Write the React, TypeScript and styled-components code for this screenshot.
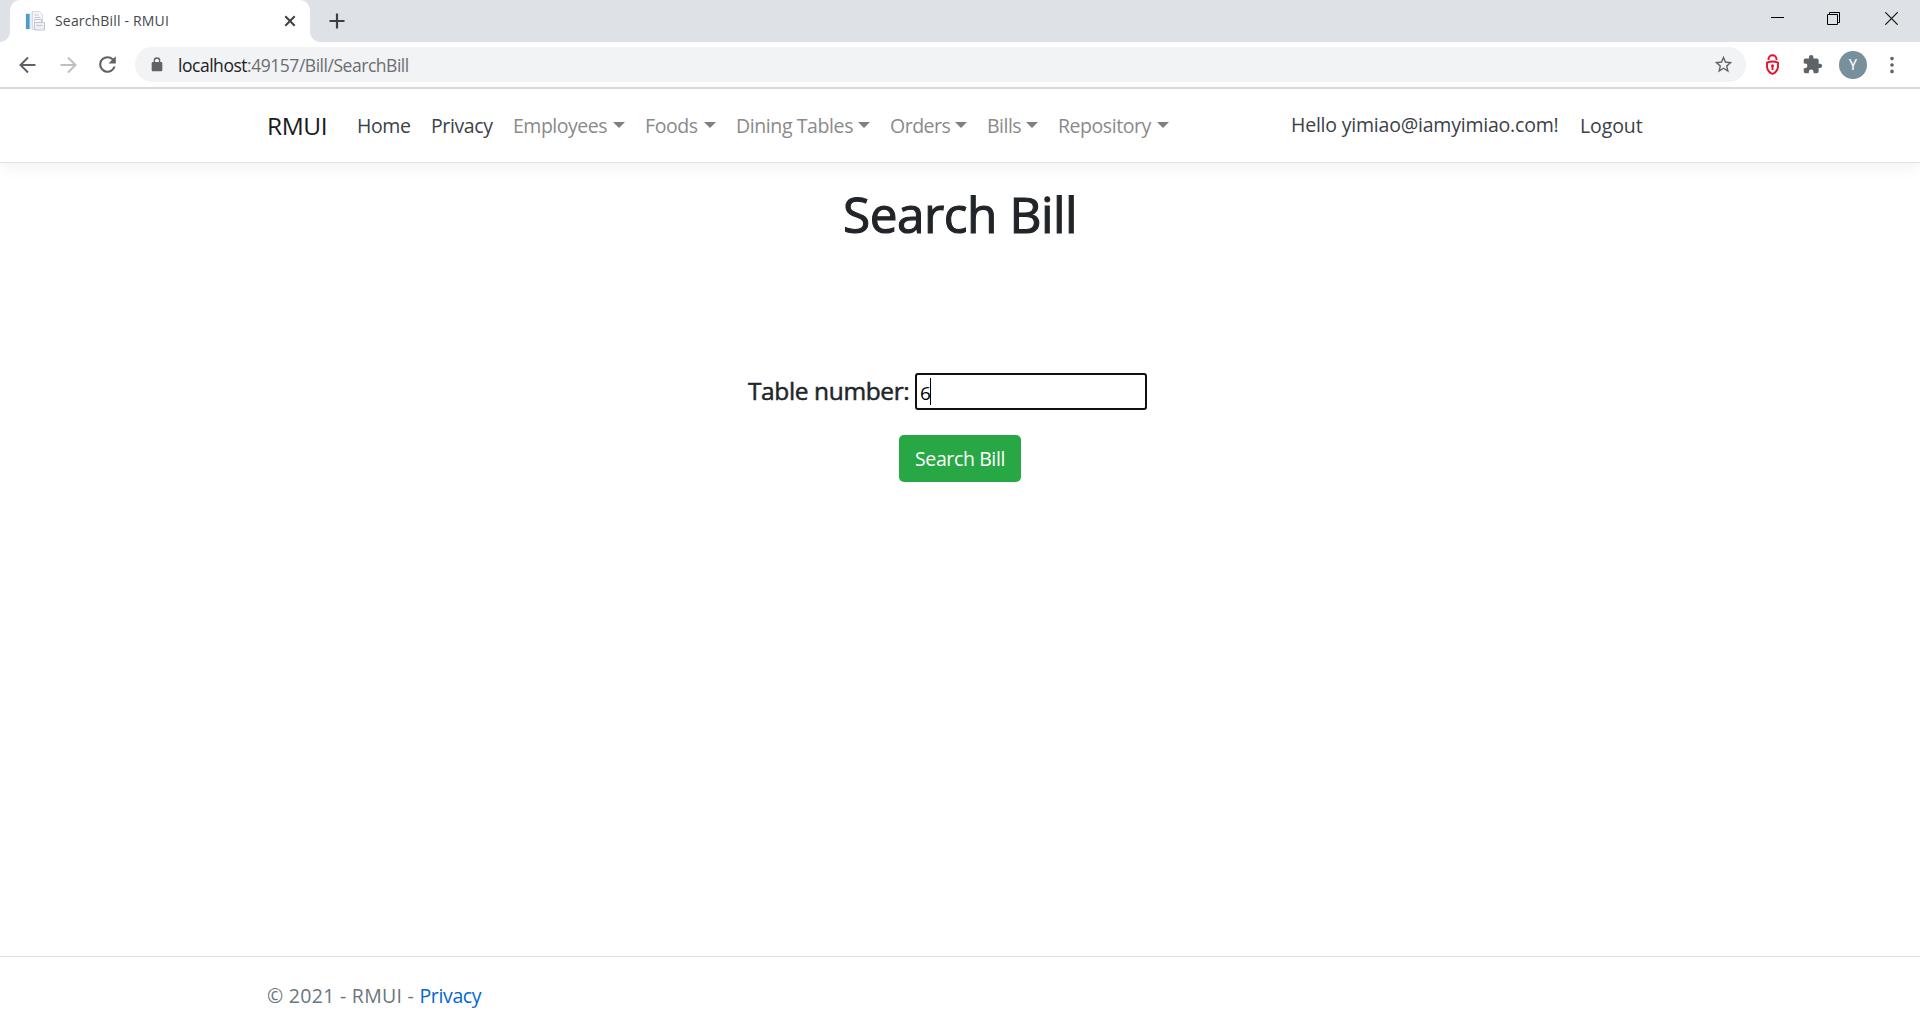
import React from 'react';
import styled, { createGlobalStyle } from 'styled-components';

const Global = createGlobalStyle`
  *, *::before, *::after { box-sizing: border-box; }
  body { margin: 0; background: #fff; overflow: hidden; }
  body, input, button { font-family: "Open Sans", "Noto Sans", sans-serif; font-weight: 400; }
`;

const Window = styled.div`
  display: flex;
  flex-direction: column;
  height: 1024px;
  color: #212529;
`;

const TabStrip = styled.div`
  display: flex;
  align-items: flex-end;
  height: 42px;
  background: #dee1e6;
`;

const Tab = styled.div`
  position: relative;
  display: flex;
  align-items: center;
  width: 300px;
  height: 42px;
  margin-left: 10px;
  padding: 0 13px 0 15px;
  border-radius: 10px 10px 0 0;
  background: #fff;
  &::before, &::after {
    content: '';
    position: absolute;
    bottom: 0;
    width: 10px;
    height: 10px;
  }
  &::before { left: -10px; background: radial-gradient(circle at 0 0, #dee1e6 9.5px, #fff 10px); }
  &::after { right: -10px; background: radial-gradient(circle at 100% 0, #dee1e6 9.5px, #fff 10px); }
`;

const Text = styled.span<{ $ls?: number }>`
  white-space: nowrap;
  letter-spacing: ${p => p.$ls ?? 0}px;
`;

const TabTitle = styled(Text)`
  flex: 1;
  margin-left: 10px;
  font-size: 14px;
  line-height: 20px;
  color: #45494d;
`;

const NewTab = styled.div`
  display: flex;
  align-items: center;
  height: 42px;
  margin-left: 19px;
`;

const Controls = styled.div`
  display: flex;
  align-items: center;
  gap: 44px;
  height: 37px;
  margin: 0 22px auto auto;
  svg:nth-child(2) { margin: 0 1px 0 -1px; }
`;

const Toolbar = styled.div`
  display: flex;
  align-items: center;
  height: 47px;
  padding: 0 18px 0 18px;
  border-bottom: 2px solid #dadce0;
`;

const NavIcons = styled.div`
  display: flex;
  align-items: center;
  gap: 20px;
  width: 117px;
  svg:last-child { margin-left: -3px; }
`;

const Omnibox = styled.div`
  display: flex;
  align-items: center;
  flex: 1;
  height: 35px;
  margin-top: -1px;
  padding: 0 12px 0 14px;
  border-radius: 18px;
  background: #f1f3f4;
`;

const Url = styled(Text)`
  flex: 1;
  margin-left: 13px;
  padding-top: 1px;
  font-size: 17.5px;
  line-height: 24px;
  color: #6a6e72;
  b { font-weight: inherit; color: #202124; }
`;

const Extensions = styled.div`
  display: flex;
  align-items: center;
  gap: 15px;
  margin-left: 14px;
  svg:nth-child(-n + 2) { margin-right: 1.5px; }
`;

const Avatar = styled.div`
  display: grid;
  place-items: center;
  width: 28px;
  height: 28px;
  border-radius: 50%;
  background: #78909c;
  color: #fff;
  font: 14px Roboto, sans-serif;
`;

const Navbar = styled.header`
  flex: none;
  height: 74px;
  padding: 10px 267px 0;
  border-bottom: 1px solid #dee2e6;
  box-shadow: 0 5px 15px rgba(0, 0, 0, 0.05);
`;

const NavRow = styled.nav`
  display: flex;
  align-items: center;
  height: 54px;
`;

const Brand = styled(Text)`
  width: 90px;
  font-size: 24.5px;
  line-height: 38px;
  color: #1a1a1a;
`;

const NavLink = styled.a<{ $w: number; $muted?: boolean }>`
  display: flex;
  align-items: center;
  flex: none;
  width: ${p => p.$w}px;
  font-size: 19.5px;
  line-height: 30px;
  color: ${p => (p.$muted ? '#8a8a8a' : '#3b4147')};
`;

const Caret = styled.i`
  margin: -3px 20px 0 auto;
  border: 6px solid transparent;
  border-top-color: #808080;
  border-bottom: 0;
`;

const Greeting = styled(NavLink)`
  margin: -2px 0 0 auto;
`;

const Main = styled.main`
  display: flex;
  flex-direction: column;
  align-items: center;
  flex: 1;
  padding-top: 21px;
`;

const Title = styled.h1<{ $ls: number }>`
  margin: 0;
  font-size: 49.5px;
  line-height: 60px;
  font-weight: 400;
  letter-spacing: ${p => p.$ls}px;
  color: #212529;
  -webkit-text-stroke: 1.1px #212529;
`;

const Field = styled.label`
  display: flex;
  align-items: center;
  width: 399px;
  height: 37px;
  margin: 129px 25px 0 0;
`;

const Label = styled(Text)`
  width: 167px;
  margin-top: -2px;
  font-size: 24.5px;
  line-height: 30px;
  -webkit-text-stroke: 0.5px #212529;
`;

const Input = styled.div`
  display: flex;
  align-items: center;
  flex: 1;
  height: 37px;
  padding: 2px 0 0 3px;
  border: 2px solid #101010;
  border-radius: 3px;
  background: #fff;
  color: #000;
  font-size: 19px;
`;

const Cursor = styled.i`
  width: 1px;
  height: 27px;
  margin: -3px 0 0 -1px;
  background: #000;
`;

const Submit = styled.button`
  width: 122px;
  height: 47px;
  margin-top: 25px;
  padding: 0;
  border: 0;
  border-radius: 5px;
  background: #28a745;
  color: #fff;
  font-size: 19.5px;
  white-space: nowrap;
`;

const Footer = styled.footer`
  height: 68px;
  padding: 24px 267px 0;
  border-top: 1px solid #dee2e6;
  font-size: 19.5px;
  line-height: 30px;
  color: #6c757d;
`;

const FooterLink = styled(Text)`
  color: #0366d6;
`;

const menus: [string, number, number][] = [
  ['Employees', 132, -0.5],
  ['Foods', 91, -0.4],
  ['Dining Tables', 154, -0.4],
  ['Orders', 97, -0.5],
  ['Bills', 71, -0.5],
  ['Repository', 131, -0.45],
];

const Icon = ({ d, size = 20, color = '#5f6368' }: { d: string; size?: number; color?: string }) => (
  <svg width={size} height={size} viewBox="0 0 24 24" fill={color} style={{ flex: 'none' }}><path d={d} /></svg>
);

const Favicon = () => (
  <svg width="20" height="20" viewBox="0 0 20 20">
    <path d="M.5 1.5H7v17H.5z" fill="#e6edf3" />
    <path d="M1 3h3.600v15H1z" fill="#4a9bd1" />
    <path d="M7.500.500h7l3 3v15h-10z" fill="#f5f6f9" stroke="#d6d9e2" />
    <path d="M9.500 4h4M9.500 6.500h6" stroke="#c5c8d4" />
    <path d="M9.500 10.500v-2h7v3" stroke="#c3c6d2" fill="#f9f9fb" />
    <path d="M9.500 11.500h10v7.500h-10z" fill="#eeeff4" stroke="#c3c6d2" />
    <path d="M11.500 14.500h6" stroke="#c3c6d2" />
  </svg>
);

export default function App() {
  return (
    <Window>
      <Global />
      <TabStrip>
        <Tab>
          <Favicon />
          <TabTitle $ls={0.17}>SearchBill - RMUI</TabTitle>
          <svg width="14" height="14" viewBox="0 0 14 14" stroke="#3c4043" strokeWidth="2"><path d="M2.300 2.300l9.400 9.400M11.700 2.300l-9.400 9.400" /></svg>
        </Tab>
        <NewTab>
          <svg width="16" height="16" viewBox="0 0 16 16" stroke="#3c4043" strokeWidth="2.200"><path d="M8 .500v15M.500 8h15" /></svg>
        </NewTab>
        <Controls>
          <svg width="13" height="13" viewBox="0 0 13 13" stroke="#000"><path d="M0 5.500h13" /></svg>
          <svg width="13" height="13" viewBox="0 0 13 13" stroke="#000" fill="none"><path d="M.500 2.500h10v10H.500zM2.500 2.500v-2h10v10h-2" /></svg>
          <svg width="13" height="13" viewBox="0 0 13 13" stroke="#111" strokeWidth="1.200"><path d="M.300.300l12.400 12.400M12.700.300L.300 12.700" /></svg>
        </Controls>
      </TabStrip>
      <Toolbar>
        <NavIcons>
          <svg width="20" height="20" viewBox="0 0 20 20" stroke="#5f6368" strokeWidth="2" fill="none"><path d="M17.500 10H3M10 2.500L2.500 10l7.500 7.500" /></svg>
          <svg width="20" height="20" viewBox="0 0 20 20" stroke="#bdbfc1" strokeWidth="2" fill="none"><path d="M2.500 10H17M10 2.500l7.500 7.500-7.500 7.500" /></svg>
          <Icon size={25} d="M17.650 6.350A7.960 7.960 0 0 0 12 4a8 8 0 1 0 7.730 10h-2.080A6 6 0 1 1 12 6c1.660 0 3.140.690 4.220 1.780L13 11h7V4z" />
        </NavIcons>
        <Omnibox>
          <Icon size={16} d="M18 9h-1V7A5 5 0 0 0 7 7v2H6a2 2 0 0 0-2 2v10c0 1.100.900 2 2 2h12a2 2 0 0 0 2-2V11a2 2 0 0 0-2-2zM9 9V7a3 3 0 0 1 6 0v2z" />
          <Url $ls={-0.47}><b>localhost</b>:49157/Bill/SearchBill</Url>
          <Icon size={21} d="M22 9.240l-7.190-.620L12 2 9.190 8.630 2 9.240l5.460 4.730L5.820 21 12 17.270 18.180 21l-1.630-7.030L22 9.240zM12 15.400l-3.760 2.270 1-4.280-3.320-2.880 4.380-.380L12 6.100l1.710 4.040 4.380.380-3.320 2.880 1 4.280L12 15.400z" />
        </Omnibox>
        <Extensions>
          <svg width="25" height="22" viewBox="0 0 25 22" fill="none" stroke="#e8112d" strokeWidth="1.900">
            <path d="M8.500 6V5.300a4 4 0 0 1 8 0V6M7 8.700q5.500-2.500 11 0v4.300q-.800 5-5.500 7Q7.800 18 7 13z" />
            <circle cx="12.500" cy="11.800" r="1.500" fill="#e8112d" stroke="none" /><path d="M12.500 12v4" />
          </svg>
          <Icon size={21} d="M20.500 11H19V7c0-1.100-.900-2-2-2h-4V3.500a2.500 2.500 0 0 0-5 0V5H4c-1.100 0-2 .900-2 2v3.800h1.500a2.700 2.700 0 0 1 0 5.400H2V20c0 1.100.900 2 2 2h3.800v-1.500a2.700 2.700 0 0 1 5.400 0V22H17c1.100 0 2-.900 2-2v-4h1.500a2.500 2.500 0 0 0 0-5z" />
          <Avatar>Y</Avatar>
          <Icon size={20} d="M12 6.500a2.200 2.200 0 1 0 0-4.400 2.200 2.200 0 0 0 0 4.400zm0 7.700a2.200 2.200 0 1 0 0-4.400 2.200 2.200 0 0 0 0 4.400zm0 7.700a2.200 2.200 0 1 0 0-4.400 2.200 2.200 0 0 0 0 4.400z" />
        </Extensions>
      </Toolbar>
      <Navbar>
        <NavRow>
          <Brand $ls={-0.4}>RMUI</Brand>
          <NavLink $w={74}><Text $ls={-0.4}>Home</Text></NavLink>
          <NavLink $w={82}><Text $ls={-0.4}>Privacy</Text></NavLink>
          {menus.map(([name, w, ls]) => (
            <NavLink key={name} $w={w} $muted><Text $ls={ls}>{name}</Text><Caret /></NavLink>
          ))}
          <Greeting $w={289}><Text $ls={-0.21}>Hello yimiao@iamyimiao.com!</Text></Greeting>
          <NavLink $w={73}><Text $ls={-0.1}>Logout</Text></NavLink>
        </NavRow>
      </Navbar>
      <Main>
        <Title $ls={-0.45}>Search Bill</Title>
        <Field>
          <Label $ls={-0.38}>Table number:</Label>
          <Input><Text $ls={0}>6</Text><Cursor /></Input>
        </Field>
        <Submit><Text $ls={-0.38}>Search Bill</Text></Submit>
      </Main>
      <Footer><Text $ls={0.28}>© 2021 - RMUI - </Text><FooterLink as="a" $ls={-0.35}>Privacy</FooterLink></Footer>
    </Window>
  );
}
